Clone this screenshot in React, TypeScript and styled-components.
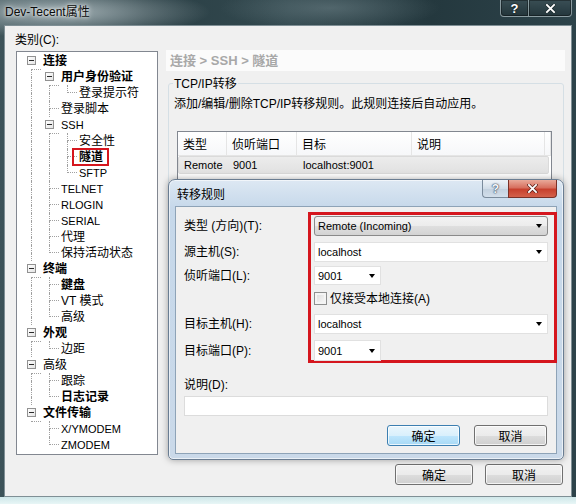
import React from 'react';
import styled, { createGlobalStyle, css } from 'styled-components';

const FONT = `"Liberation Sans", "Noto Sans CJK SC", sans-serif`;

const GlobalStyle = createGlobalStyle`
  html, body { margin: 0; padding: 0; }
  body {
    width: 576px; height: 504px; overflow: hidden;
    font-family: ${FONT}; font-size: 12px; color: #000;
  }
  * { box-sizing: border-box; }
`;

/* ---------- outer window ---------- */
const Frame = styled.div`
  width: 576px;
  height: 504px;
  display: flex;
  flex-direction: column;
  padding: 0 4px 7px;
  background:
    linear-gradient(to bottom, transparent 497px, #cfe7e9 497px, #e8f6f6 504px),
    radial-gradient(150px 26px at 60px 12px, rgba(175,188,192,0.9), rgba(175,188,192,0) 100%),
    radial-gradient(110px 22px at 330px 8px, rgba(110,130,136,0.55), rgba(110,130,136,0) 100%),
    linear-gradient(90deg, #3d5359 0%, #2a3f45 25%, #33494f 50%, #24383e 75%, #2d434a 100%);
`;

const TitleBar = styled.div`
  height: 25px;
  display: flex;
  align-items: flex-start;
`;

const WindowTitle = styled.div`
  padding-left: 1px;
  line-height: 24px;
  font-size: 12px;
  color: #0a0a0a;
  text-shadow: 0 0 6px rgba(255,255,255,0.95), 0 0 3px rgba(255,255,255,0.8);
`;

const CaptionGroup = styled.div`
  margin-left: auto;
  display: flex;
  height: 17px;
`;

const CaptionBtn = styled.div<{ $w: number; $first?: boolean; $last?: boolean }>`
  width: ${p => p.$w}px;
  height: 17px;
  display: flex;
  align-items: center;
  justify-content: center;
  border: 1px solid rgba(210,225,228,0.55);
  border-top: none;
  ${p => p.$first && css`border-bottom-left-radius: 4px; border-right: none;`}
  ${p => p.$last && css`border-bottom-right-radius: 4px;`}
  background: linear-gradient(rgba(70,90,96,0.55), rgba(30,45,50,0.55));
  box-shadow: inset 0 0 0 1px rgba(0,0,0,0.35);
  color: #fff;
  font: bold 13px ${FONT};
  text-shadow: 0 0 2px #000;
`;

/* ---------- client ---------- */
const Client = styled.div`
  position: relative;
  flex: 1;
  min-height: 0;
  background: #f0f0f0;
  border: 1px solid #7f8f95;
  padding: 6px 6px 11px 11px;
  display: flex;
  flex-direction: column;
`;

const Body = styled.div`
  display: flex;
  gap: 8px;
`;

const LeftCol = styled.div`
  width: 146px;
  display: flex;
  flex-direction: column;
`;

const CatLabel = styled.div`
  line-height: 16px;
  margin-left: -1px;
`;

const Tree = styled.div`
  margin-top: 3px;
  height: 404px;
  border: 1px solid #828790;
  background: #fff;
  padding: 1px 0 0 6px;
  display: flex;
  flex-direction: column;
`;

const TreeRow = styled.div`
  display: flex;
  align-items: center;
  height: 16px;
  flex: none;
`;

const Conn = styled.span`
  display: grid;
  grid-template-columns: 9px 9px;
  grid-template-rows: 8px 8px;
  width: 18px;
  height: 16px;
  flex: none;
`;

const Quad = styled.span<{ $r?: boolean; $b?: boolean }>`
  ${p => p.$r && css`border-right: 1px dotted #a0a0a0;`}
  ${p => p.$b && css`border-bottom: 1px dotted #a0a0a0;`}
`;

const Expander = styled.span`
  grid-area: 1 / 1 / 3 / 3;
  align-self: start;
  justify-self: start;
  margin: 3px 0 0 4px;
  width: 9px;
  height: 9px;
  border: 1px solid #919191;
  background: linear-gradient(135deg, #ffffff, #e4e4e4);
  display: flex;
  align-items: center;
  justify-content: center;
`;

const Minus = styled.span`
  width: 5px;
  height: 1px;
  background: #2a2a2a;
`;

const NodeLabel = styled.span<{ $bold?: boolean; $latin?: boolean; $sel?: boolean }>`
  padding-left: 2px;
  line-height: 16px;
  white-space: nowrap;
  font-weight: ${p => (p.$bold ? 700 : 400)};
  font-size: ${p => (p.$latin ? 11 : 12)}px;
  ${p =>
    p.$sel &&
    css`
      margin-left: -5px;
      padding: 0 4px 0 5px;
      border: 2px solid #d5161e;
      line-height: 14px;
    `}
`;

const RightCol = styled.div`
  flex: 1;
  display: flex;
  flex-direction: column;
  padding-top: 18px;
`;

const Crumb = styled.div`
  height: 21px;
  line-height: 21px;
  background: #fbfbfb;
  padding-left: 4px;
  font-weight: 700;
  font-size: 13px;
  color: #a8a8a8;
`;

const Group = styled.div`
  margin: 12px 1px 0 2px;
  height: 372px;
  border: 1px solid #d5dfe5;
  border-radius: 3px;
  padding: 0 11px 0 5px;
  display: flex;
  flex-direction: column;
`;

const GroupTitle = styled.div`
  align-self: flex-start;
  margin: -8px 0 0 -1px;
  padding: 0 1px;
  line-height: 16px;
  background: #f0f0f0;
`;

const Desc = styled.div`
  margin-top: 4px;
  line-height: 16px;
  white-space: nowrap;
`;

const ListView = styled.div`
  margin: 19px 0 0 3px;
  height: 120px;
  border: 1px solid #828790;
  background: #fff;
  display: flex;
  flex-direction: column;
`;

const ListHeader = styled.div`
  display: flex;
  height: 24px;
  background: linear-gradient(#ffffff, #f6f7f9);
  border-bottom: 1px solid #e5e5e5;
`;

const HeadCell = styled.div<{ $w?: number }>`
  ${p => (p.$w ? css`width: ${p.$w}px;` : css`flex: 1;`)}
  border-right: 1px solid #e5e5e5;
  padding: 3px 0 0 5px;
  line-height: 20px;
  font-size: 12px;
`;

const ListRow = styled.div`
  display: flex;
  height: 18px;
  margin: 0 2px 0 0;
  background: linear-gradient(#ececec, #e1e1e1);
  border: 1px solid #dadada;
  border-radius: 2px;
`;

const Cell = styled.div<{ $w?: number }>`
  ${p => (p.$w ? css`width: ${p.$w}px;` : css`flex: 1;`)}
  padding-left: 5px;
  line-height: 17px;
  font-size: 11px;
  white-space: nowrap;
`;

const Footer = styled.div`
  margin-top: 9px;
  display: flex;
  justify-content: flex-end;
  gap: 12px;
  padding-right: 2px;
`;

const Btn = styled.button<{ $w: number; $primary?: boolean }>`
  width: ${p => p.$w}px;
  height: 21px;
  padding: 0;
  font: 12px ${FONT};
  color: #000;
  border-radius: 3px;
  border: 1px solid ${p => (p.$primary ? '#3c7fb1' : '#707070')};
  background: ${p =>
    p.$primary
      ? 'linear-gradient(#eaf6fd 0%, #d9f0fc 50%, #bee6fd 51%, #a7d9f5 100%)'
      : 'linear-gradient(#f2f2f2 0%, #ebebeb 50%, #dddddd 51%, #cfcfcf 100%)'};
  box-shadow: inset 0 0 0 1px rgba(255, 255, 255, 0.75);
`;

/* ---------- modal dialog ---------- */
const Modal = styled.div`
  position: absolute;
  left: 163px;
  top: 153px;
  width: 396px;
  height: 281px;
  border: 1px solid #6a7d92;
  border-radius: 7px 7px 5px 5px;
  background: linear-gradient(#dde8f3 0px, #c6d8ea 28px, #cad9e9 100%);
  box-shadow: 0 0 7px rgba(0, 0, 0, 0.35), inset 0 0 0 1px rgba(255, 255, 255, 0.6);
  padding: 0 6px 5px 6px;
  display: flex;
  flex-direction: column;
`;

const ModalBar = styled.div`
  height: 27px;
  display: flex;
  align-items: flex-start;
`;

const ModalTitle = styled.div`
  margin-top: 7px;
  padding-left: 2px;
  line-height: 16px;
  font-size: 12px;
`;

const ModalCaption = styled.div`
  margin-left: auto;
  display: flex;
  height: 18px;
`;

const HelpBtn = styled.div`
  width: 26px;
  height: 18px;
  border: 1px solid #7b8b9c;
  border-top: none;
  border-right: none;
  border-bottom-left-radius: 4px;
  background: linear-gradient(#eef3f8, #d2dde8 50%, #c2d0de 51%, #d3dfeb);
  display: flex;
  align-items: center;
  justify-content: center;
  font: bold 12px ${FONT};
  color: #f4f7fa;
  text-shadow: 0 0 1px #44546a, 0 0 1px #44546a, 0 0 2px #44546a;
`;

const CloseBtn = styled.div`
  width: 49px;
  height: 18px;
  border: 1px solid #7a3128;
  border-top: none;
  border-bottom-right-radius: 4px;
  background: linear-gradient(#e9a999, #d7705f 45%, #c7402d 55%, #d4614b);
  display: flex;
  align-items: center;
  justify-content: center;
`;

const ModalBody = styled.div`
  flex: 1;
  background: #f0f0f0;
  border: 1px solid #8ea3b7;
  padding: 5px 8px 7px 8px;
  display: flex;
  flex-direction: column;
`;

const Form = styled.div`
  display: grid;
  grid-template-columns: 124px 1fr;
  grid-template-rows: 28px 24px 23px 23px 28px 25px;
`;

const Mark = styled.div`
  grid-column: 2;
  grid-row: 1 / 7;
  margin-right: -9px;
  border: 3px solid #d5161e;
`;

const FieldLabel = styled.div<{ $row: number }>`
  grid-column: 1;
  grid-row: ${p => p.$row};
  align-self: center;
  line-height: 16px;
  white-space: nowrap;
`;

const Combo = styled.div<{ $row: number; $w?: number; $h?: number; $readonly?: boolean }>`
  grid-column: 2;
  grid-row: ${p => p.$row};
  align-self: center;
  margin-left: 6px;
  ${p => (p.$w ? css`width: ${p.$w}px; justify-self: start;` : css`margin-right: 0;`)}
  height: ${p => p.$h ?? 20}px;
  display: flex;
  align-items: center;
  padding-left: 3px;
  font-size: 11px;
  ${p =>
    p.$readonly
      ? css`
          border: 1px solid #8a8a8a;
          border-radius: 3px;
          background: linear-gradient(#f3f3f3 0%, #ececec 50%, #dfdfdf 51%, #d3d3d3 100%);
        `
      : css`
          border: 1px solid #e1e1e1;
          background: #fff;
        `}
`;

const ComboText = styled.span`
  flex: 1;
  white-space: nowrap;
`;

const Arrow = styled.span`
  width: 0;
  height: 0;
  margin-right: 5px;
  border-left: 3.5px solid transparent;
  border-right: 3.5px solid transparent;
  border-top: 4px solid #000;
`;

const CheckRow = styled.label`
  grid-column: 2;
  grid-row: 4;
  align-self: center;
  margin-left: 6px;
  display: flex;
  align-items: center;
  gap: 3px;
  line-height: 16px;
`;

const CheckBox = styled.span`
  width: 13px;
  height: 13px;
  border: 1px solid #8e8f8f;
  background: linear-gradient(135deg, #d9d9d9, #fbfbfb);
  box-shadow: inset 0 0 0 2px #f4f4f4;
`;

const DescLabel = styled.div`
  margin-top: 14px;
  line-height: 16px;
`;

const DescInput = styled.div`
  margin-top: 3px;
  height: 20px;
  border: 1px solid #dcdcdc;
  background: #fff;
`;

const ModalButtons = styled.div`
  margin-top: 9px;
  display: flex;
  justify-content: flex-end;
  gap: 14px;
  padding-right: 1px;
`;

const XGlyph = ({ size = 10, stroke = '#fff', outline = '#3a2a28' }: { size?: number; stroke?: string; outline?: string }) => (
  <svg width={size + 2} height={size} viewBox="0 0 12 10">
    <path d="M2 1 L10 9 M10 1 L2 9" stroke={outline} strokeWidth="3.6" strokeLinecap="square" fill="none" />
    <path d="M2 1 L10 9 M10 1 L2 9" stroke={stroke} strokeWidth="2" strokeLinecap="square" fill="none" />
  </svg>
);

type Node = { t: string; l: number; box?: boolean; bold?: boolean; sel?: boolean; latin?: boolean };

const nodes: Node[] = [
  { t: '连接', l: 0, box: true, bold: true },
  { t: '用户身份验证', l: 1, box: true, bold: true },
  { t: '登录提示符', l: 2 },
  { t: '登录脚本', l: 1 },
  { t: 'SSH', l: 1, box: true, latin: true },
  { t: '安全性', l: 2 },
  { t: '隧道', l: 2, bold: true, sel: true },
  { t: 'SFTP', l: 2, latin: true },
  { t: 'TELNET', l: 1, latin: true },
  { t: 'RLOGIN', l: 1, latin: true },
  { t: 'SERIAL', l: 1, latin: true },
  { t: '代理', l: 1 },
  { t: '保持活动状态', l: 1 },
  { t: '终端', l: 0, box: true, bold: true },
  { t: '鍵盘', l: 1, bold: true },
  { t: 'VT 模式', l: 1 },
  { t: '高级', l: 1 },
  { t: '外观', l: 0, box: true, bold: true },
  { t: '边距', l: 1 },
  { t: '高级', l: 0, box: true },
  { t: '跟踪', l: 1 },
  { t: '日志记录', l: 1, bold: true },
  { t: '文件传输', l: 0, box: true, bold: true },
  { t: 'X/YMODEM', l: 1, latin: true },
  { t: 'ZMODEM', l: 1, latin: true },
];

function continues(i: number, level: number): boolean {
  for (let j = i + 1; j < nodes.length; j++) {
    if (nodes[j].l < level) return false;
    if (nodes[j].l === level) return true;
  }
  return false;
}

function TreeNode({ n, i }: { n: Node; i: number }) {
  const guides = [];
  for (let k = 0; k < n.l; k++) {
    const on = continues(i, k);
    guides.push(
      <Conn key={k}>
        <Quad $r={on} />
        <Quad />
        <Quad $r={on} />
        <Quad />
      </Conn>
    );
  }
  return (
    <TreeRow>
      {guides}
      <Conn>
        <Quad $r={i !== 0} />
        <Quad $b />
        <Quad $r={continues(i, n.l)} />
        <Quad />
        {n.box && (
          <Expander>
            <Minus />
          </Expander>
        )}
      </Conn>
      <NodeLabel $bold={n.bold} $latin={n.latin} $sel={n.sel}>
        {n.t}
      </NodeLabel>
    </TreeRow>
  );
}

const cols = [49, 70, 115, 133];

export default function App() {
  return (
    <>
      <GlobalStyle />
      <Frame>
        <TitleBar>
          <WindowTitle>Dev-Tecent属性</WindowTitle>
          <CaptionGroup>
            <CaptionBtn $w={28} $first>?</CaptionBtn>
            <CaptionBtn $w={44} $last>
              <XGlyph size={9} outline="#1b2a2e" />
            </CaptionBtn>
          </CaptionGroup>
        </TitleBar>
        <Client>
          <Body>
            <LeftCol>
              <CatLabel>类别(C):</CatLabel>
              <Tree>
                {nodes.map((n, i) => (
                  <TreeNode key={i} n={n} i={i} />
                ))}
              </Tree>
            </LeftCol>
            <RightCol>
              <Crumb>连接 &gt; SSH &gt; 隧道</Crumb>
              <Group>
                <GroupTitle>TCP/IP转移</GroupTitle>
                <Desc>添加/编辑/删除TCP/IP转移规则。此规则连接后自动应用。</Desc>
                <ListView>
                  <ListHeader>
                    <HeadCell $w={cols[0]}>类型</HeadCell>
                    <HeadCell $w={cols[1]}>侦听端口</HeadCell>
                    <HeadCell $w={cols[2]}>目标</HeadCell>
                    <HeadCell $w={cols[3]}>说明</HeadCell>
                    <HeadCell />
                  </ListHeader>
                  <ListRow>
                    <Cell $w={cols[0]}>Remote</Cell>
                    <Cell $w={cols[1]}>9001</Cell>
                    <Cell $w={cols[2]}>localhost:9001</Cell>
                    <Cell />
                  </ListRow>
                </ListView>
              </Group>
            </RightCol>
          </Body>
          <Footer>
            <Btn $w={78}>确定</Btn>
            <Btn $w={78}>取消</Btn>
          </Footer>

          <Modal>
            <ModalBar>
              <ModalTitle>转移规则</ModalTitle>
              <ModalCaption>
                <HelpBtn>?</HelpBtn>
                <CloseBtn>
                  <XGlyph size={9} outline="#5a1f18" />
                </CloseBtn>
              </ModalCaption>
            </ModalBar>
            <ModalBody>
              <Form>
                <Mark />
                <FieldLabel $row={1}>类型 (方向)(T):</FieldLabel>
                <Combo $row={1} $readonly>
                  <ComboText>Remote (Incoming)</ComboText>
                  <Arrow />
                </Combo>
                <FieldLabel $row={2}>源主机(S):</FieldLabel>
                <Combo $row={2}>
                  <ComboText>localhost</ComboText>
                  <Arrow />
                </Combo>
                <FieldLabel $row={3}>侦听端口(L):</FieldLabel>
                <Combo $row={3} $w={67} $h={19}>
                  <ComboText>9001</ComboText>
                  <Arrow />
                </Combo>
                <CheckRow>
                  <CheckBox />
                  仅接受本地连接(A)
                </CheckRow>
                <FieldLabel $row={5}>目标主机(H):</FieldLabel>
                <Combo $row={5}>
                  <ComboText>localhost</ComboText>
                  <Arrow />
                </Combo>
                <FieldLabel $row={6}>目标端口(P):</FieldLabel>
                <Combo $row={6} $w={67} $h={21}>
                  <ComboText>9001</ComboText>
                  <Arrow />
                </Combo>
              </Form>
              <DescLabel>说明(D):</DescLabel>
              <DescInput />
              <ModalButtons>
                <Btn $w={73} $primary>
                  确定
                </Btn>
                <Btn $w={73}>取消</Btn>
              </ModalButtons>
            </ModalBody>
          </Modal>
        </Client>
      </Frame>
    </>
  );
}
